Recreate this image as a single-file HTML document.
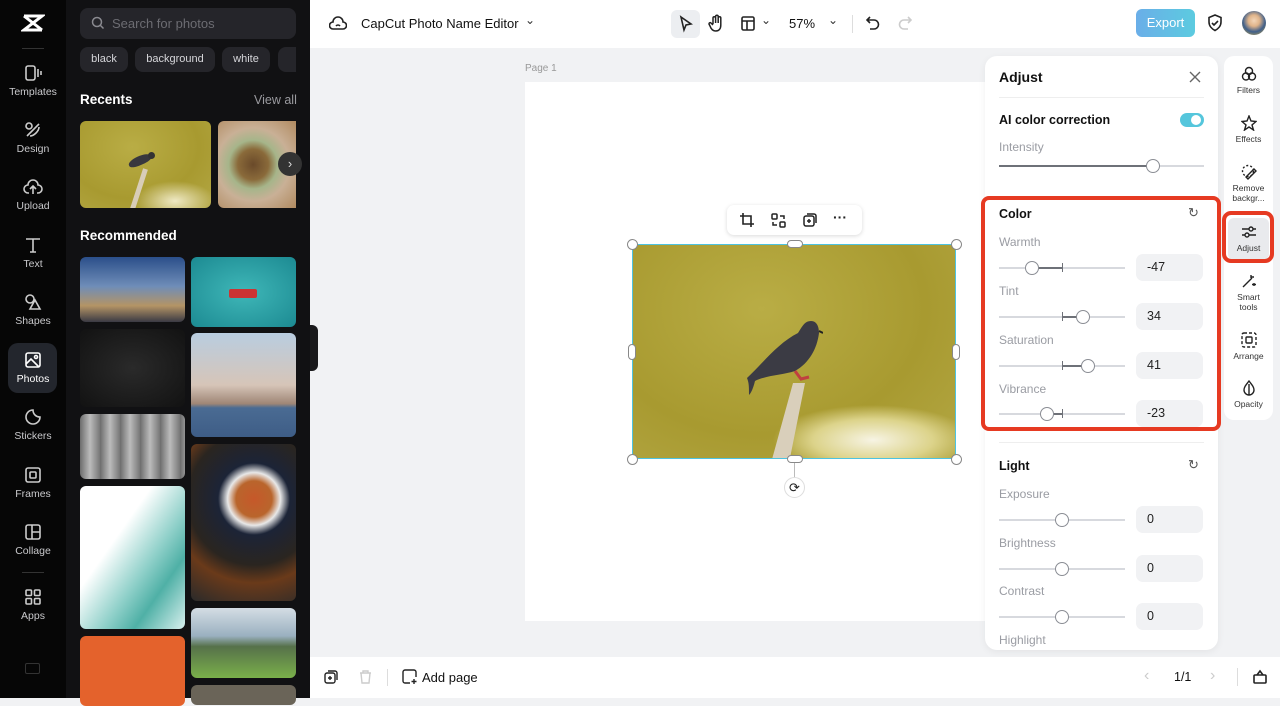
<!DOCTYPE html>
<html><head><meta charset="utf-8">
<style>
*{box-sizing:border-box;margin:0;padding:0}
body{width:1280px;height:698px;overflow:hidden;font-family:"Liberation Sans",sans-serif;background:#f1f2f4;position:relative}
.abs{position:absolute}
#nav{left:0;top:0;width:66px;height:698px;background:#060606}
.ni{position:absolute;left:0;width:66px;text-align:center;color:#c9c9cc;font-size:10.5px}
.ni svg{display:block;margin:0 auto 4px}
#panel{left:66px;top:0;width:244px;height:698px;background:#111113}
.chip{position:absolute;top:47px;height:25px;border-radius:8px;background:#25252a;color:#d6d6da;font-size:11px;line-height:25px;text-align:center}
.th{position:absolute;border-radius:6px;overflow:hidden}
#top{left:310px;top:0;width:970px;height:48px;background:#fff}
#bot{left:310px;top:657px;width:970px;height:41px;background:#fff}
.lbl{position:absolute;left:14px;color:#9a9ca3;font-size:12px}
.trk{position:absolute;left:14px;width:126px;height:2px;background:#d7d9de}
.knob{position:absolute;width:14px;height:14px;border-radius:50%;background:#fff;border:1px solid #8a8d94}
.box{position:absolute;left:151px;width:67px;height:27px;border-radius:7px;background:#f1f2f4;font-size:12.5px;color:#222;line-height:27px;padding-left:11px}
.rt{position:absolute;left:0;width:49px;text-align:center;font-size:8.5px;color:#333;line-height:10px}
.rt svg{display:block;margin:0 auto 3px}
.h{position:absolute;width:11px;height:11px;border-radius:50%;background:#fff;border:1px solid #888}
</style></head><body>
<div id="nav" class="abs">
 <svg class="abs" style="left:21px;top:13px" width="24" height="20" viewBox="0 0 24 20"><path d="M3 3h18l-18 14h18M3 3l18 14" stroke="#fff" stroke-width="3" fill="none"/></svg>
 <div class="abs" style="left:22px;top:48px;width:22px;height:1px;background:#333"></div>
 <div class="ni" style="top:64px"><svg width="18" height="18" viewBox="0 0 18 18" fill="none" stroke="#ccc" stroke-width="1.6"><rect x="2" y="2" width="9" height="14" rx="2"/><path d="M14 5v8M17 7v4"/></svg>Templates</div>
 <div class="ni" style="top:121px"><svg width="18" height="18" viewBox="0 0 18 18" fill="none" stroke="#ccc" stroke-width="1.6"><circle cx="5" cy="5" r="3"/><path d="M3 15l12-12M6 15c4 0 9-5 9-9"/></svg>Design</div>
 <div class="ni" style="top:178px"><svg width="20" height="18" viewBox="0 0 20 18" fill="none" stroke="#ccc" stroke-width="1.6"><path d="M6 15H5a4 4 0 0 1 0-8 5 5 0 0 1 10 0 4 4 0 0 1 0 8h-1M10 16V9M7 11l3-3 3 3"/></svg>Upload</div>
 <div class="ni" style="top:236px"><svg width="18" height="18" viewBox="0 0 18 18" fill="none" stroke="#ccc" stroke-width="1.6"><path d="M2 3h14M9 3v13M6 16h6"/></svg>Text</div>
 <div class="ni" style="top:293px"><svg width="18" height="18" viewBox="0 0 18 18" fill="none" stroke="#ccc" stroke-width="1.6"><circle cx="6" cy="6" r="4"/><path d="M11 7l5 9H6z"/></svg>Shapes</div>
 <div class="abs" style="left:8px;top:343px;width:49px;height:50px;border-radius:10px;background:#23262d"></div>
 <div class="ni" style="top:351px;color:#fff"><svg width="18" height="18" viewBox="0 0 18 18" fill="none" stroke="#fff" stroke-width="1.6"><rect x="2" y="2" width="14" height="14" rx="2"/><path d="M2 13l5-5 8 8"/><circle cx="12" cy="6" r="1.5"/></svg>Photos</div>
 <div class="ni" style="top:408px"><svg width="18" height="18" viewBox="0 0 18 18" fill="none" stroke="#ccc" stroke-width="1.6"><path d="M16 9a7 7 0 1 1-7-7c0 4 3 7 7 7z"/></svg>Stickers</div>
 <div class="ni" style="top:466px"><svg width="18" height="18" viewBox="0 0 18 18" fill="none" stroke="#ccc" stroke-width="1.6"><rect x="2" y="2" width="14" height="14" rx="2"/><rect x="6" y="6" width="6" height="6" rx="1"/></svg>Frames</div>
 <div class="ni" style="top:523px"><svg width="18" height="18" viewBox="0 0 18 18" fill="none" stroke="#ccc" stroke-width="1.6"><rect x="2" y="2" width="14" height="14" rx="2"/><path d="M8 2v14M8 9h8"/></svg>Collage</div>
 <div class="abs" style="left:22px;top:572px;width:22px;height:1px;background:#333"></div>
 <div class="ni" style="top:588px"><svg width="18" height="18" viewBox="0 0 18 18" fill="none" stroke="#ccc" stroke-width="1.6"><rect x="2" y="2" width="5.5" height="5.5" rx="1"/><rect x="10.5" y="2" width="5.5" height="5.5" rx="1"/><rect x="2" y="10.5" width="5.5" height="5.5" rx="1"/><rect x="10.5" y="10.5" width="5.5" height="5.5" rx="1"/></svg>Apps</div>
 <div class="abs" style="left:25px;top:663px;width:15px;height:11px;border:1.5px solid #333;border-radius:2px"></div>
</div>
<div id="panel" class="abs">
 <div class="abs" style="left:14px;top:8px;width:216px;height:31px;border-radius:8px;background:#25252a"></div>
 <svg class="abs" style="left:25px;top:16px" width="14" height="14" viewBox="0 0 14 14" fill="none" stroke="#8a8a90" stroke-width="1.5"><circle cx="6" cy="6" r="4.5"/><path d="M9.5 9.5l3 3"/></svg>
 <div class="abs" style="left:46px;top:16px;color:#6c6c72;font-size:13px">Search for photos</div>
 <div class="chip" style="left:14px;width:48px">black</div>
 <div class="chip" style="left:69px;width:80px">background</div>
 <div class="chip" style="left:156px;width:48px">white</div>
 <div class="chip" style="left:212px;width:18px;border-radius:8px 0 0 8px"></div>
 <div class="abs" style="left:14px;top:92px;color:#fff;font-size:13.5px;font-weight:bold">Recents</div>
 <div class="abs" style="left:188px;top:93px;color:#9a9a9f;font-size:12.5px">View all</div>
 <div class="th" style="left:14px;top:121px;width:131px;height:87px;background:radial-gradient(ellipse 40px 20px at 95px 80px,#efe9c4,transparent),radial-gradient(ellipse at 40% 30%,#b9ad45,#a89a30 60%,#b3a744)"><div class="abs" style="left:48px;top:35px;width:24px;height:9px;background:#38383e;border-radius:50% 60% 40% 50%;transform:rotate(-25deg)"></div><div class="abs" style="left:68px;top:31px;width:7px;height:7px;background:#333;border-radius:50%"></div><div class="abs" style="left:63px;top:48px;width:5px;height:42px;background:#d8cdb8;transform:rotate(18deg);transform-origin:top"></div></div>
 <div class="th" style="left:152px;top:121px;width:78px;height:87px;border-radius:6px 0 0 6px;background:radial-gradient(circle at 45% 50%,#6a4a2a 0,#8a6a3a 25%,#a6b58a 40%,#c9b096 60%,#b08a60)"></div>
 <div class="abs" style="left:212px;top:152px;width:24px;height:24px;border-radius:50%;background:#333;color:#ddd;font-size:13px;text-align:center;line-height:23px">›</div>
 <div class="abs" style="left:14px;top:228px;color:#fff;font-size:13.5px;font-weight:bold">Recommended</div>
 <div class="th" style="left:14px;top:257px;width:105px;height:65px;background:linear-gradient(#2b4f8a,#6f8db8 45%,#b49465 75%,#3a3a44)"></div>
 <div class="th" style="left:125px;top:257px;width:105px;height:70px;background:radial-gradient(#3fb7b8,#1c8a92)"><div class="abs" style="left:38px;top:32px;width:28px;height:9px;background:#c33;border-radius:2px"></div></div>
 <div class="th" style="left:14px;top:329px;width:105px;height:78px;background:radial-gradient(#2a2a2a,#121212)"></div>
 <div class="th" style="left:125px;top:333px;width:105px;height:104px;background:linear-gradient(#b9cde0,#d6c5b8 50%,#9f8676 68%,#4a6b93 72%,#3e5d86)"></div>
 <div class="th" style="left:14px;top:414px;width:105px;height:65px;background:repeating-linear-gradient(90deg,#6c6c6c 0,#bbb 10px,#777 20px)"></div>
 <div class="th" style="left:125px;top:444px;width:105px;height:157px;background:radial-gradient(circle at 60% 35%,#c6582a 0,#b9652c 15%,#e8e8e8 22%,#1c2437 30%,#2a2520 55%,#6a3a1a 70%,#2a2a2a)"></div>
 <div class="th" style="left:14px;top:486px;width:105px;height:143px;background:linear-gradient(125deg,#fff 35%,#8fd0c9 60%,#4fb0a6 75%,#d8f0ee)"></div>
 <div class="th" style="left:125px;top:608px;width:105px;height:70px;background:linear-gradient(#d4dde4,#9ab0c0 40%,#56714a 55%,#7ab04a)"></div>
 <div class="th" style="left:14px;top:636px;width:105px;height:70px;background:#e4622c"></div>
 <div class="th" style="left:125px;top:685px;width:105px;height:20px;background:#6a6458"></div>
</div>
<div class="abs" style="left:310px;top:325px;width:8px;height:46px;background:#1a1a1c;border-radius:0 6px 6px 0"></div>

<div id="top" class="abs">
 <svg class="abs" style="left:19px;top:15px" width="18" height="17" viewBox="0 0 18 17" fill="none" stroke="#222" stroke-width="1.6"><path d="M5 14H4a3.5 3.5 0 0 1 0-7 5 5 0 0 1 10 0 3.5 3.5 0 0 1 0 7H5z"/><path d="M7 11a2.5 2.5 0 0 1 4 0"/></svg>
 <div class="abs" style="left:51px;top:16px;font-size:13px;color:#111">CapCut Photo Name Editor</div>
 <div class="abs" style="left:215px;top:13px;font-size:12px;color:#333">⌄</div>
 <div class="abs" style="left:361px;top:10px;width:29px;height:28px;border-radius:6px;background:#eceef1"></div>
 <svg class="abs" style="left:368px;top:15px" width="16" height="18" viewBox="0 0 16 18" fill="none" stroke="#222" stroke-width="1.6"><path d="M3 2l10 7-5 1-2 5z"/></svg>
 <svg class="abs" style="left:398px;top:14px" width="17" height="19" viewBox="0 0 17 19" fill="none" stroke="#222" stroke-width="1.5"><path d="M5 10V4a1.3 1.3 0 0 1 2.6 0v5V2.5a1.3 1.3 0 0 1 2.6 0V9V4a1.3 1.3 0 0 1 2.6 0v7c0 4-2 6-5 6S3 15 2 12l-1-2a1.2 1.2 0 0 1 2-1l2 2"/></svg>
 <svg class="abs" style="left:431px;top:16px" width="14" height="15" viewBox="0 0 14 15" fill="none" stroke="#222" stroke-width="1.6"><rect x="1" y="1" width="12" height="13" rx="1.5"/><path d="M1 5h12M6 5v9"/></svg>
 <div class="abs" style="left:451px;top:13px;font-size:12px;color:#333">⌄</div>
 <div class="abs" style="left:479px;top:16px;font-size:13px;color:#111">57%</div>
 <div class="abs" style="left:518px;top:13px;font-size:12px;color:#333">⌄</div>
 <div class="abs" style="left:542px;top:15px;width:1px;height:18px;background:#ddd"></div>
 <svg class="abs" style="left:556px;top:15px" width="14" height="16" viewBox="0 0 14 16" fill="none" stroke="#222" stroke-width="1.6"><path d="M4 2L1 5l3 3M1 5h7a4.5 4.5 0 0 1 0 9H4"/></svg>
 <svg class="abs" style="left:588px;top:15px" width="14" height="16" viewBox="0 0 14 16" fill="none" stroke="#ccc" stroke-width="1.6"><path d="M10 2l3 3-3 3M13 5H6a4.5 4.5 0 0 0 0 9h4"/></svg>
 <div class="abs" style="left:826px;top:9px;width:59px;height:28px;border-radius:6px;background:linear-gradient(90deg,#6aaee8,#5ccbe0);color:#fff;font-size:13px;text-align:center;line-height:28px">Export</div>
 <svg class="abs" style="left:897px;top:14px" width="16" height="18" viewBox="0 0 16 18" fill="none" stroke="#222" stroke-width="1.6"><path d="M8 1l6 2.5V8c0 4-3 7-6 8.5C5 15 2 12 2 8V3.5z"/><path d="M5 9l2 2 4-4"/></svg>
 <div class="abs" style="left:932px;top:11px;width:24px;height:24px;border-radius:50%;background:radial-gradient(circle at 50% 40%,#f3d6b8 0,#e0b48a 30%,#3f5f8a 60%,#d8b040)"></div>
</div>

<div class="abs" style="left:525px;top:63px;font-size:10px;color:#999">Page 1</div>
<div class="abs" style="left:525px;top:82px;width:470px;height:539px;background:#fff"></div>
<div class="abs" style="left:727px;top:205px;width:135px;height:30px;border-radius:7px;background:#fff;box-shadow:0 1px 4px rgba(0,0,0,.15)"></div>
<svg class="abs" style="left:740px;top:213px" width="14" height="14" viewBox="0 0 14 14" fill="none" stroke="#222" stroke-width="1.6"><path d="M3 0v11h11M0 3h11v11"/></svg>
<svg class="abs" style="left:771px;top:213px" width="15" height="15" viewBox="0 0 15 15" fill="none" stroke="#222" stroke-width="1.5"><rect x="1" y="1" width="5" height="5" rx="1"/><rect x="9" y="9" width="5" height="5" rx="1"/><path d="M9 3h4v3M6 12H2V9"/></svg>
<svg class="abs" style="left:803px;top:213px" width="14" height="14" viewBox="0 0 14 14" fill="none" stroke="#222" stroke-width="1.5"><rect x="1" y="3" width="10" height="10" rx="2"/><path d="M4 1h7a2 2 0 0 1 2 2v7M6 6v4M4 8h4"/></svg>
<div class="abs" style="left:833px;top:209px;font-size:14px;color:#222;font-weight:bold">···</div>
<div class="abs" style="left:632px;top:244px;width:324px;height:215px;overflow:hidden;background:radial-gradient(ellipse 100px 35px at 240px 195px,#f7f4e4 0,#dcd38a 60%,transparent 100%),radial-gradient(ellipse at 40% 30%,#b9ad45,#a89a30 60%,#b3a744);border:1px solid #4ec3e0">
 <svg class="abs" style="left:110px;top:58px" width="80" height="160" viewBox="0 0 80 160">
  <path d="M50 80 L62 80 L46 160 L28 160 Z" fill="#d9cfbb"/>
  <path d="M4 75 C20 60 35 40 55 30 C60 22 62 18 68 18 C74 18 76 24 76 30 C74 46 66 60 52 68 C40 72 24 72 12 78 C10 86 8 90 6 92 C6 84 6 80 4 75Z" fill="#3b3b44"/>
  <path d="M52 68 l6 8 l8 -2" stroke="#c04040" stroke-width="3" fill="none"/>
  <path d="M76 28 l4 2" stroke="#222" stroke-width="2"/>
 </svg>
</div>
<div class="h" style="left:627px;top:239px"></div><div class="h" style="left:951px;top:239px"></div>
<div class="h" style="left:627px;top:454px"></div><div class="h" style="left:951px;top:454px"></div>
<div class="abs" style="left:787px;top:240px;width:16px;height:8px;border-radius:4px;background:#fff;border:1px solid #888"></div>
<div class="abs" style="left:787px;top:455px;width:16px;height:8px;border-radius:4px;background:#fff;border:1px solid #888"></div>
<div class="abs" style="left:628px;top:344px;width:8px;height:16px;border-radius:4px;background:#fff;border:1px solid #888"></div>
<div class="abs" style="left:952px;top:344px;width:8px;height:16px;border-radius:4px;background:#fff;border:1px solid #888"></div>
<div class="abs" style="left:794px;top:463px;width:1px;height:14px;background:#bbb"></div>
<div class="abs" style="left:784px;top:477px;width:21px;height:21px;border-radius:50%;background:#fff;border:1px solid #ddd;font-size:13px;text-align:center;line-height:19px;color:#222">⟳</div>

<div class="abs" style="left:985px;top:56px;width:233px;height:594px;background:#fff;border-radius:12px;box-shadow:0 2px 8px rgba(0,0,0,.06);overflow:hidden">
 <div class="abs" style="left:14px;top:13px;font-size:14px;font-weight:bold;color:#111">Adjust</div>
 <svg class="abs" style="left:204px;top:15px" width="12" height="12" viewBox="0 0 12 12" stroke="#666" stroke-width="1.4"><path d="M1 1l10 10M11 1L1 11"/></svg>
 <div class="abs" style="left:14px;top:41px;width:205px;height:1px;background:#eee"></div>
 <div class="abs" style="left:14px;top:57px;font-size:12.5px;font-weight:bold;color:#111">AI color correction</div>
 <div class="abs" style="left:195px;top:57px;width:24px;height:14px;border-radius:7px;background:#55c6dc"><div class="abs" style="left:11px;top:2px;width:10px;height:10px;border-radius:50%;background:#fff"></div></div>
 <div class="lbl" style="top:84px">Intensity</div>
 <div class="trk" style="top:109px;width:205px"></div>
 <div class="abs" style="left:14px;top:109px;width:153px;height:2px;background:#6e7178"></div>
 <div class="knob" style="left:161px;top:103px"></div>
 <div class="abs" style="left:14px;top:140px;width:205px;height:1px;background:#eee"></div>
 <div class="abs" style="left:14px;top:151px;font-size:12.5px;font-weight:bold;color:#111">Color</div>
 <div class="abs" style="left:203px;top:149px;font-size:13px;color:#555">↻</div>
 <div class="lbl" style="top:179px">Warmth</div>
 <div class="trk" style="top:211px"></div><div class="abs" style="left:47px;top:211px;width:31px;height:2px;background:#6e7178"></div><div class="abs" style="left:77px;top:207px;width:1px;height:9px;background:#6e7178"></div><div class="knob" style="left:40px;top:205px"></div>
 <div class="box" style="top:198px">-47</div>
 <div class="lbl" style="top:228px">Tint</div>
 <div class="trk" style="top:260px"></div><div class="abs" style="left:77px;top:260px;width:20px;height:2px;background:#6e7178"></div><div class="abs" style="left:77px;top:256px;width:1px;height:9px;background:#6e7178"></div><div class="knob" style="left:91px;top:254px"></div>
 <div class="box" style="top:247px">34</div>
 <div class="lbl" style="top:277px">Saturation</div>
 <div class="trk" style="top:309px"></div><div class="abs" style="left:77px;top:309px;width:25px;height:2px;background:#6e7178"></div><div class="abs" style="left:77px;top:305px;width:1px;height:9px;background:#6e7178"></div><div class="knob" style="left:96px;top:303px"></div>
 <div class="box" style="top:296px">41</div>
 <div class="lbl" style="top:326px">Vibrance</div>
 <div class="trk" style="top:357px"></div><div class="abs" style="left:62px;top:357px;width:16px;height:2px;background:#6e7178"></div><div class="abs" style="left:77px;top:353px;width:1px;height:9px;background:#6e7178"></div><div class="knob" style="left:55px;top:351px"></div>
 <div class="box" style="top:344px">-23</div>
 <div class="abs" style="left:14px;top:386px;width:205px;height:1px;background:#eee"></div>
 <div class="abs" style="left:14px;top:403px;font-size:12.5px;font-weight:bold;color:#111">Light</div>
 <div class="abs" style="left:203px;top:401px;font-size:13px;color:#555">↻</div>
 <div class="lbl" style="top:431px">Exposure</div>
 <div class="trk" style="top:463px"></div><div class="knob" style="left:70px;top:457px"></div><div class="box" style="top:450px">0</div>
 <div class="lbl" style="top:480px">Brightness</div>
 <div class="trk" style="top:512px"></div><div class="knob" style="left:70px;top:506px"></div><div class="box" style="top:499px">0</div>
 <div class="lbl" style="top:528px">Contrast</div>
 <div class="trk" style="top:560px"></div><div class="knob" style="left:70px;top:554px"></div><div class="box" style="top:547px">0</div>
 <div class="lbl" style="top:577px">Highlight</div>
</div>
<div class="abs" style="left:981px;top:196px;width:240px;height:235px;border:4px solid #e63a22;border-radius:8px"></div>

<div class="abs" style="left:1224px;top:56px;width:49px;height:364px;background:#fff;border-radius:10px">
 <div class="rt" style="top:10px"><svg width="16" height="16" viewBox="0 0 16 16" fill="none" stroke="#222" stroke-width="1.4"><circle cx="8" cy="5" r="3.5"/><circle cx="5" cy="10.5" r="3.5"/><circle cx="11" cy="10.5" r="3.5"/></svg>Filters</div>
 <div class="rt" style="top:59px"><svg width="16" height="16" viewBox="0 0 16 16" fill="none" stroke="#222" stroke-width="1.4"><path d="M8 1l2 5 5 .5-4 3.5 1.5 5L8 12l-4.5 3 1.5-5-4-3.5 5-.5z"/></svg>Effects</div>
 <div class="rt" style="top:108px"><svg width="16" height="16" viewBox="0 0 16 16" fill="none" stroke="#222" stroke-width="1.4"><circle cx="7" cy="7" r="5.5" stroke-dasharray="2 2"/><path d="M5 13l8-8 2 2-8 8z"/></svg>Remove<br>backgr...</div>
 <div class="abs" style="left:4px;top:162px;width:41px;height:42px;border-radius:6px;background:#e9eaed"></div>
 <div class="rt" style="top:168px"><svg width="16" height="16" viewBox="0 0 16 16" fill="none" stroke="#222" stroke-width="1.4"><path d="M1 5h14M1 11h14"/><circle cx="10" cy="5" r="2" fill="#e9eaed"/><circle cx="6" cy="11" r="2" fill="#e9eaed"/></svg>Adjust</div>
 <div class="rt" style="top:217px"><svg width="16" height="16" viewBox="0 0 16 16" fill="none" stroke="#222" stroke-width="1.4"><path d="M2 14l9-9M10 2v3M13 4h-3M13 10v3M15 11.5h-4"/></svg>Smart<br>tools</div>
 <div class="rt" style="top:276px"><svg width="16" height="16" viewBox="0 0 16 16" fill="none" stroke="#222" stroke-width="1.4"><rect x="1" y="1" width="14" height="14" rx="2" stroke-dasharray="3 2"/><rect x="5" y="5" width="6" height="6" rx="1"/></svg>Arrange</div>
 <div class="rt" style="top:324px"><svg width="16" height="16" viewBox="0 0 16 16" fill="none" stroke="#222" stroke-width="1.4"><path d="M8 1c3 4 5 6 5 9a5 5 0 0 1-10 0c0-3 2-5 5-9z"/><path d="M8 4v11" /></svg>Opacity</div>
</div>
<div class="abs" style="left:1222px;top:211px;width:52px;height:52px;border:4px solid #e63a22;border-radius:9px"></div>

<div id="bot" class="abs">
 <svg class="abs" style="left:14px;top:13px" width="14" height="14" viewBox="0 0 14 14" fill="none" stroke="#222" stroke-width="1.4"><rect x="1" y="3" width="10" height="10" rx="2"/><path d="M4 1h7a2 2 0 0 1 2 2v7M6 6v4M4 8h4"/></svg>
 <svg class="abs" style="left:49px;top:13px" width="13" height="14" viewBox="0 0 13 14" fill="none" stroke="#ccc" stroke-width="1.4"><path d="M1 3h11M4 3V1h5v2M2 3l1 10h7l1-10"/></svg>
 <div class="abs" style="left:77px;top:12px;width:1px;height:17px;background:#ddd"></div>
 <svg class="abs" style="left:92px;top:12px" width="16" height="16" viewBox="0 0 16 16" fill="none" stroke="#222" stroke-width="1.4"><path d="M14 8V3a2 2 0 0 0-2-2H3a2 2 0 0 0-2 2v9a2 2 0 0 0 2 2h5M12 10v5M9.5 12.5h5"/></svg>
 <div class="abs" style="left:112px;top:13px;font-size:13px;color:#111">Add page</div>
 <div class="abs" style="left:834px;top:10px;font-size:16px;color:#ccc">‹</div>
 <div class="abs" style="left:864px;top:13px;font-size:12.5px;color:#111">1/1</div>
 <div class="abs" style="left:900px;top:10px;font-size:16px;color:#ccc">›</div>
 <div class="abs" style="left:927px;top:11px;width:1px;height:18px;background:#ddd"></div>
 <svg class="abs" style="left:943px;top:12px" width="14" height="15" viewBox="0 0 14 15" fill="none" stroke="#222" stroke-width="1.6"><rect x="1" y="6" width="12" height="8" rx="1"/><path d="M4 6l3-4 3 4"/></svg>
</div>
</body></html>
